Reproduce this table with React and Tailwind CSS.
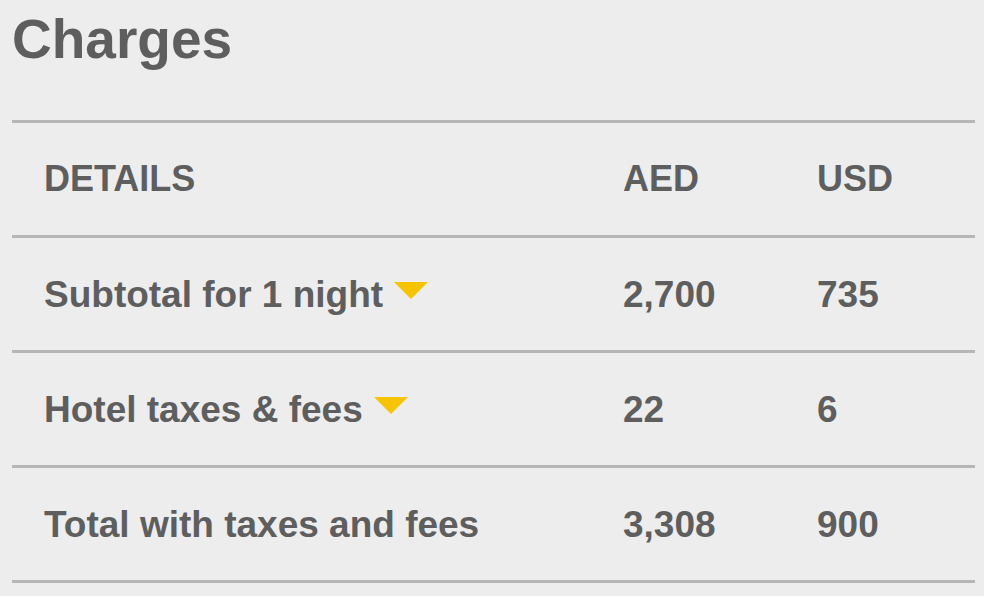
import React from 'react';

const rows = [
  { label: 'Subtotal for 1 night', aed: '2,700', usd: '735', toggle: true },
  { label: 'Hotel taxes & fees', aed: '22', usd: '6', toggle: true },
  { label: 'Total with taxes and fees', aed: '3,308', usd: '900', toggle: false },
];

const Caret = () => (
  <svg width="34" height="17" viewBox="0 0 34 17" className="ml-[11px] -translate-y-[4px] shrink-0">
    <polygon points="0,0 34,0 17,17" fill="#f6c400" />
  </svg>
);

const App = () => {
  return (
    <div className="min-h-screen w-[984px] h-[596px] bg-[#ededed] text-[#5e5e5e] font-['Liberation_Sans',Arial,sans-serif] font-bold overflow-hidden">
      <div className="h-[120px] pl-[12px] pt-[11px]">
        <h1 className="text-[55px] leading-[56px]">Charges</h1>
      </div>

      <div className="ml-[12px] w-[963px] border-b-[3px] border-[#b6b6b6]">
        <div className="grid grid-cols-[579px_194px_1fr] h-[115px] items-center border-t-[3px] border-[#b6b6b6] pl-[32px] text-[36px] leading-none">
          <div>DETAILS</div>
          <div>AED</div>
          <div>USD</div>
        </div>

        {rows.map((row) => (
          <div
            key={row.label}
            className="grid grid-cols-[579px_194px_1fr] h-[115px] items-center border-t-[3px] border-[#b6b6b6] pl-[32px] text-[37px] leading-none"
          >
            <div className="flex items-center">
              <span>{row.label}</span>
              {row.toggle && <Caret />}
            </div>
            <div>{row.aed}</div>
            <div>{row.usd}</div>
          </div>
        ))}
      </div>
    </div>
  );
};

export default App;
